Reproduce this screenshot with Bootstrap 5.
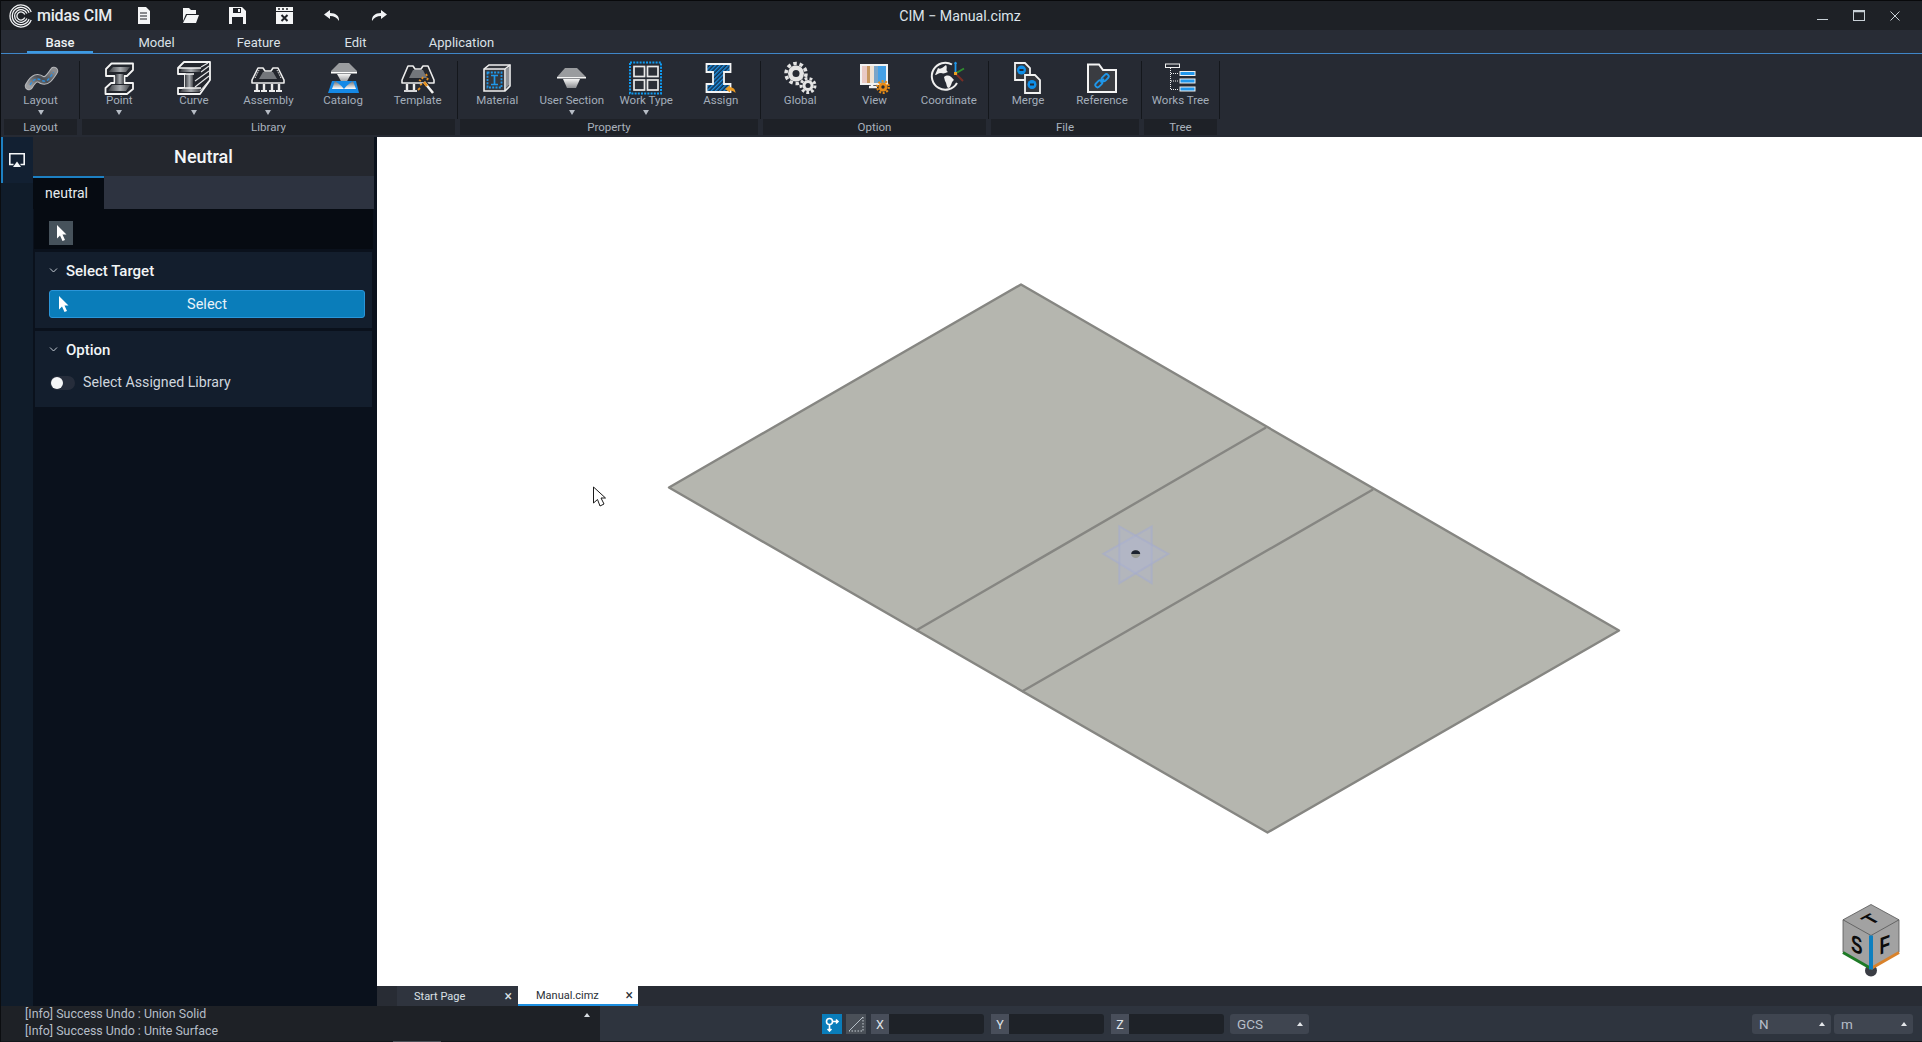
<!DOCTYPE html>
<html lang="en">
<head>
<meta charset="utf-8">
<title>CIM - Manual.cimz</title>
<link href="https://cdn.jsdelivr.net/npm/bootstrap@5.3.0/dist/css/bootstrap.min.css" rel="stylesheet">
<style>
html,body{height:100%;}
body{width:1922px;height:1042px;overflow:hidden;background:#14171c;font-family:Roboto,"Liberation Sans",sans-serif;color:#d8dee6;border-left:1px solid #0b0d10;}
.defs-holder{width:0;height:0;display:block;}
.title-bar{height:30px;flex:none;background:#1e2126;border-top:1px solid #08090b;padding-left:8px;color:#dfe5ea;}
.brand-name{font-size:16px;font-weight:500;letter-spacing:-.2px;margin-left:4px;color:#e8ecef;width:86px;white-space:nowrap;}
.qa-slot{width:47px;display:flex;justify-content:center;}
.qa-first{margin-left:-3px;}
.doc-title{font-size:14.2px;color:#dde4ea;width:200px;text-align:center;margin-left:458px;margin-top:3px;}
.win-ctrls{margin-left:auto;padding-right:22px;gap:25px;}
.tab-row{height:24px;flex:none;background:#282c35;border-bottom:1px solid #3f86c8;padding-left:26px;}
.tab-item{font-size:13px;color:#dbe1e7;text-align:center;height:23px;line-height:25px;border-bottom:2px solid transparent;}
.tab-item.is-on{border-bottom-color:#3d9be3;color:#eef2f5;font-weight:500;width:66px;}
.ribbon{height:83px;flex:none;background:#262a33;padding-left:3px;}
.rb-group{display:flex;flex-direction:column;}
.rb-items{height:65px;display:flex;}
.rb-item{flex:1 1 0;min-width:0;display:flex;flex-direction:column;align-items:center;padding-top:6px;}
.rb-item svg{display:block;overflow:visible;margin-bottom:-1px;}
.rb-text{font-size:11.5px;line-height:14px;color:#a3adba;white-space:nowrap;}
.rb-caret{width:0;height:0;border-left:3.5px solid transparent;border-right:3.5px solid transparent;border-top:5px solid #b6bcc5;margin-top:3px;}
.rb-label{height:16px;line-height:17px;font-size:11.5px;text-align:center;background:#1e2127;color:#a9b1bc;}
.rb-sep{width:1px;margin:7px 2px 18px;background:#14171c;}
.main-area{min-height:0;}
.rail{width:32px;flex:none;background:#101c2a;}
.rail-on{height:46px;border-left:2px solid #1d80c3;padding:10px 0 0 6px;background:#122032;}
.side-panel{width:344px;flex:none;background:#0a111c;padding-right:3px;}
.panel-head{height:39px;background:#24272e;color:#f4f6f8;font-size:18px;font-weight:500;line-height:39px;text-align:center;}
.panel-tabs{height:33px;background:#2d3340;}
.panel-tab{width:71px;background:#060b12;border-top:2px solid #1d80c3;font-size:14px;line-height:31px;padding-left:1px;padding-right:5px;text-align:center;color:#e6ebef;height:33px;}
.panel-tools{height:40px;background:#060b12;padding:12px 0 0 15px;margin:0 1px;}
.tool-btn{width:24px;height:24px;background:#46525b;display:flex;align-items:center;justify-content:center;}
.prop-sec{background:#131e2d;margin:3px 2px 0;height:76px;padding:0 7px 0 14px;}
.sec-head{height:38px;font-size:15px;font-weight:500;color:#f2f5f7;}
.chev{width:16px;margin-right:1px;}
.sel-btn{height:28px;width:316px;--bs-btn-border-radius:3px;background:#0a7dba;border:1px solid #2a95d8;color:#e9f2f8;font-size:14.5px;padding:1px 0 0;position:relative;line-height:26px;}
.sel-btn:hover{background:#0a7dba;border-color:#2a95d8;color:#e9f2f8;}
.sel-ptr{position:absolute;left:8px;top:5px;}
.switch-track{width:25px;height:14px;border-radius:7px;background:#262d3b;display:flex;align-items:center;padding-left:1px;}
.switch-knob{width:12px;height:12px;border-radius:50%;background:#f6f7f8;}
.switch-text{font-size:14.2px;color:#cfd6de;margin-left:8px;}
.opt-row{padding-left:1px;height:28px;}
.work-col{min-width:0;}
.canvas-box{background:#fff;height:849px;}
.canvas-box svg{display:block;}
.doc-tabs{height:20px;flex:none;background:#282c34;padding-left:20px;font-size:11px;line-height:22px;}
.doc-tab{width:121px;background:#2f343e;color:#dbe1e7;padding-left:17px;display:flex;justify-content:space-between;padding-right:6px;}
.doc-x{font-size:14px;line-height:20px;}
.doc-tab.is-on{background:#fff;color:#2b2f36;border-bottom:2px solid #1d8fe0;line-height:20px;width:120px;padding-left:18px;padding-right:5px;}
.doc-tab.is-on .doc-x{line-height:18px;}
.status-bar{height:36px;flex:none;background:#2e343e;border-bottom:1px solid #14171c;}
.log-box{width:599px;height:35px;background:#1e2126;position:relative;padding:0 0 0 24px;font-size:12.4px;line-height:16.500px;color:#b6bec8;}
.log-arrow{position:absolute;left:583px;top:7px;width:0;height:0;border-left:3px solid transparent;border-right:3px solid transparent;border-bottom:4px solid #d8dde2;}
.log-tick{position:absolute;left:392px;bottom:-1px;width:48px;height:1px;background:#4c5058;}
.st-controls{padding-left:222px;width:1322px;height:35px;}
.st-ico{width:20px;height:20px;display:flex;align-items:center;justify-content:center;}
.st-ico.on{background:#0a7dba;margin-right:4px;}
.st-ico.off{background:#4a5058;margin-right:5px;}
.st-field{width:113px;height:20px;background:#1e2228;border-radius:0 3px 3px 0;margin-right:7px;display:flex;}
.st-key{width:18px;background:#484e5a;color:#dfe3e8;font-size:12.5px;line-height:21px;text-align:center;}
.st-sel{height:20px;background:#3f4550;border-radius:3px;color:#b7bfc9;font-size:13.5px;line-height:20px;padding:0 6px 0 7px;display:flex;align-items:center;justify-content:space-between;}
.st-up{width:0;height:0;border-left:3px solid transparent;border-right:3px solid transparent;border-bottom:4px solid #e4e7ea;}
.sel-gcs{width:79px;margin-left:-1px;}
.sel-n{width:79px;margin-left:443px;margin-right:3px;}
.sel-m{width:79px;}
.cube-txt{font-family:"Liberation Sans",sans-serif;font-size:24px;font-weight:700;fill:#0c0c0c;text-anchor:middle;}
</style>
</head>
<body class="d-flex flex-column">
<svg class="defs-holder">
<defs>
<linearGradient id="gSteel" x1="0" x2="1" y1="0" y2="0"><stop offset="0" stop-color="#3a3d42"/><stop offset=".55" stop-color="#a8abaf"/><stop offset="1" stop-color="#47494e"/></linearGradient>
<linearGradient id="gHat" x1="0" x2="0" y1="0" y2="1"><stop offset="0" stop-color="#f5f5f5"/><stop offset="1" stop-color="#8a8c90"/></linearGradient>
<linearGradient id="gBook" x1="0" x2="0" y1="0" y2="1"><stop offset="0" stop-color="#666a70"/><stop offset="1" stop-color="#ffffff"/></linearGradient>
<linearGradient id="gRoad" x1="0" x2="1" y1="1" y2="0"><stop offset="0" stop-color="#9fa1a4"/><stop offset=".5" stop-color="#4a4d53"/><stop offset="1" stop-color="#8b8d91"/></linearGradient>
<pattern id="pHatch" width="3" height="3" patternUnits="userSpaceOnUse" patternTransform="rotate(45)"><rect width="3" height="3" fill="#12314f"/><rect width="1.400" height="3" fill="#1f8fe0"/></pattern>
</defs>
</svg>

<div class="title-bar d-flex align-items-center">
  <svg width="24" height="24" viewBox="0 0 24 24" fill="none" stroke="#f0f2f4" stroke-width="1.300"><path d="M22.200 7.900A11 11 0 1 0 22.200 16.100"/><path d="M20.070 8.740A8.700 8.700 0 1 0 20.070 15.260"/><path d="M17.930 9.600A6.400 6.400 0 1 0 17.930 14.400"/><path d="M15.800 10.460A4.100 4.100 0 1 0 15.800 13.540"/></svg>
  <span class="brand-name">midas CIM</span>
  <span class="qa-slot qa-first"><svg width="14" height="17" viewBox="0 0 14 17"><path d="M1 0H9L13 4V17H1Z" fill="#f4f5f6"/><path d="M3 6H10M3 9H10M3 12H10" stroke="#1e2126" stroke-width="1.200"/></svg></span>
  <span class="qa-slot"><svg width="17" height="17" viewBox="0 0 17 17"><path d="M1 1H7L9 3H14V7H4L1 14Z" fill="#f4f5f6"/><path d="M5 8H17L14 16H1Z" fill="#f4f5f6"/></svg></span>
  <span class="qa-slot"><svg width="17" height="17" viewBox="0 0 17 17"><path d="M0 0H13L17 4V17H0Z" fill="#f4f5f6"/><rect x="4" y="1" width="8" height="5" fill="#1e2126"/><rect x="9" y="2" width="2" height="3" fill="#f4f5f6"/><rect x="3" y="10" width="11" height="7" fill="#1e2126"/></svg></span>
  <span class="qa-slot"><svg width="17" height="17" viewBox="0 0 17 17"><rect width="17" height="17" fill="#f4f5f6"/><path d="M2 2H4M6 2H8M10 2H12" stroke="#1e2126" stroke-width="1.500"/><rect y="4" width="17" height="1" fill="#1e2126"/><path d="M5.500 8L11.500 14M11.500 8L5.500 14" stroke="#1e2126" stroke-width="2"/></svg></span>
  <span class="qa-slot"><svg width="16" height="11" viewBox="0 0 16 11"><path d="M6 0L0 4.500L6 9V6C10 6 13 7.500 15 11C15.500 6 12 3 6 3Z" fill="#f1f3f5"/></svg></span>
  <span class="qa-slot"><svg width="16" height="11" viewBox="0 0 16 11"><path d="M10 0L16 4.500L10 9V6C6 6 3 7.500 1 11C.5 6 4 3 10 3Z" fill="#f1f3f5"/></svg></span>
  <span class="doc-title">CIM − Manual.cimz</span>
  <div class="win-ctrls d-flex align-items-center">
    <svg width="11" height="12" viewBox="0 0 11 12"><path d="M0 9.500H11" stroke="#c8d0d6" stroke-width="1"/></svg>
    <svg width="12" height="11" viewBox="0 0 12 11" fill="none"><rect x=".5" y=".5" width="11" height="10" stroke="#c8d0d6"/><path d="M0 1.500H12" stroke="#c8d0d6" stroke-width="1.500"/></svg>
    <svg width="10" height="10" viewBox="0 0 10 10"><path d="M.5 .5L9.500 9.500M9.500 .5L.5 9.500" stroke="#c8d0d6" stroke-width="1"/></svg>
  </div>
</div>

<div class="tab-row d-flex">
  <div class="tab-item is-on">Base</div>
  <div class="tab-item" style="width:127px">Model</div>
  <div class="tab-item" style="width:77px">Feature</div>
  <div class="tab-item" style="width:117px">Edit</div>
  <div class="tab-item" style="width:95px">Application</div>
</div>

<div class="ribbon d-flex">
  <div class="rb-group" style="width:73px">
    <div class="rb-items">
      <div class="rb-item"><svg width="36" height="34" viewBox="0 0 36 34"><path d="M6 26C11 17 15 17 19 20C24 22 27 17 31 11" fill="none" stroke="#b8b9bc" stroke-width="8.500" stroke-linecap="round"/><path d="M6 26C11 17 15 17 19 20C24 22 27 17 31 11" fill="none" stroke="url(#gRoad)" stroke-width="6.500" stroke-linecap="round"/><path d="M7 25C11 18 15 18 19 20.500C24 23 27 18 30.500 12" fill="none" stroke="#2a8fe0" stroke-width="1.300" stroke-dasharray="3 2"/></svg><div class="rb-text">Layout</div><div class="rb-caret"></div></div>
    </div>
    <div class="rb-label">Layout</div>
  </div>
  <div class="rb-sep"></div>
  <div class="rb-group" style="width:373px">
    <div class="rb-items">
      <div class="rb-item"><svg width="36" height="34" viewBox="0 0 36 34"><path d="M5 9L10.500 3.500H32V10L26 16H23.500V23H32V29L26 34H4.500V28L10 23H13.500V16H5Z" fill="#23262d" stroke="#f4f4f4" stroke-width="1.800" stroke-linejoin="round"/><path d="M7.500 12L12 7H29L25 12Z" fill="url(#gSteel)"/><rect x="14.500" y="14" width="8" height="10" fill="url(#gSteel)"/><path d="M7 31L11 25H29L25 31Z" fill="url(#gSteel)"/></svg><div class="rb-text">Point</div><div class="rb-caret"></div></div>
      <div class="rb-item"><svg width="36" height="34" viewBox="0 0 36 34"><path d="M2 8L8 2H34V20L24 34H2V28H9V14H2Z" fill="#23262d" stroke="#f4f4f4" stroke-width="1.800" stroke-linejoin="round"/><path d="M9 14H17V28H9Z" fill="url(#gSteel)"/><path d="M4 12H24V8H6ZM4 32H24V28H7Z" fill="url(#gSteel)"/><path d="M25 7L32 3M25 12L33 6M19 21L33 11M19 27L33 16M24 31L33 21" stroke="#e5e6e8" stroke-width="1.100"/><path d="M2 14H18M2 8H25M2 28H25" stroke="#f4f4f4" stroke-width="1.500"/></svg><div class="rb-text">Curve</div><div class="rb-caret"></div></div>
      <div class="rb-item"><svg width="36" height="34" viewBox="0 0 36 34"><path d="M2 20L8 8H13L15 11H21L23 8H28L34 20V23H2Z" fill="#23262d" stroke="#ececec" stroke-width="1.600" stroke-linejoin="round"/><path d="M9 19L13 12H23L27 19Z" fill="#73767b"/><path d="M7 24V30M14 24V30M22 24V30M29 24V30" stroke="#ececec" stroke-width="2.400"/><path d="M4 31H10M11 31H17M19 31H25M26 31H32" stroke="#ececec" stroke-width="1.800"/><path d="M5 18L9 10M31 18L27 10" stroke="#ececec" stroke-width="1" stroke-dasharray="1.500 1"/></svg><div class="rb-text">Assembly</div><div class="rb-caret"></div></div>
      <div class="rb-item"><svg width="36" height="34" viewBox="0 0 36 34"><path d="M14 3H24L32 11V13H6V11Z" fill="#9a9c9f"/><rect x="6" y="12" width="26" height="1.500" fill="#fff"/><path d="M12 14H26L21 23H17Z" fill="url(#gHat)"/><path d="M7 21H31L34 33H3Z" fill="#1589e6"/><path d="M10 21C14 24 16 25 19 29C22 25 24 24 28 21L31 29H7Z" fill="url(#gBook)"/></svg><div class="rb-text">Catalog</div></div>
      <div class="rb-item"><svg width="36" height="34" viewBox="0 0 36 34"><path d="M2 20L8 6H13L15 9H21L23 6H28L34 20V23H2Z" fill="#23262d" stroke="#ececec" stroke-width="1.600" stroke-linejoin="round"/><path d="M9 18L13 10H23L27 18Z" fill="#73767b"/><path d="M7 24V30M14 24V30" stroke="#ececec" stroke-width="2.400"/><path d="M4 31H17" stroke="#ececec" stroke-width="1.800"/><path d="M24 22L33 33" stroke="#23262d" stroke-width="5"/><path d="M24 22L33 33" stroke="#f2f2f2" stroke-width="2.600"/><path d="M24 22L27 26" stroke="#e6901f" stroke-width="2.600"/><path d="M20 25L22 24M22 19L23 17M28 18L27 20M19 20L21 21M26 14L27 16M18 30L20 28" stroke="#e6901f" stroke-width="1.800"/></svg><div class="rb-text">Template</div></div>
    </div>
    <div class="rb-label">Library</div>
  </div>
  <div class="rb-sep"></div>
  <div class="rb-group" style="width:298px">
    <div class="rb-items">
      <div class="rb-item"><svg width="36" height="34" viewBox="0 0 36 34"><path d="M5 9L10 5H31V26L26 31H5Z" fill="#34373d" stroke="#efefef" stroke-width="1.600"/><path d="M5 9H26V31M26 9L31 5" fill="none" stroke="#efefef" stroke-width="1.600"/><path d="M27 9L30 7V25L27 28Z" fill="#8e9196"/><rect x="8.500" y="12.500" width="14" height="15" fill="none" stroke="#1f97ea" stroke-width="1.800" stroke-dasharray="2 1.300"/><path d="M12 15.500H19M12 24.500H19M15.500 15.500V24.500" stroke="#1f97ea" stroke-width="1.700"/></svg><div class="rb-text">Material</div></div>
      <div class="rb-item"><svg width="36" height="34" viewBox="0 0 36 34"><path d="M11 8H23L32 17V18H3V17Z" fill="#9a9c9f"/><rect x="3" y="17" width="29" height="1.500" fill="#f4f4f4"/><path d="M9 19H26L22 28H13Z" fill="url(#gHat)"/></svg><div class="rb-text">User Section</div><div class="rb-caret"></div></div>
      <div class="rb-item"><svg width="36" height="34" viewBox="0 0 36 34"><rect x="2" y="2.500" width="31" height="31" fill="none" stroke="#0f9bf2" stroke-width="2" stroke-dasharray="2 1.200"/><g fill="#2b2f37" stroke="#e9e9e9" stroke-width="1.700"><rect x="6" y="6.500" width="10.500" height="10"/><rect x="19.500" y="6.500" width="10.500" height="10"/><rect x="6" y="20" width="10.500" height="10"/><rect x="19.500" y="20" width="10.500" height="10"/></g></svg><div class="rb-text">Work Type</div><div class="rb-caret"></div></div>
      <div class="rb-item"><svg width="36" height="34" viewBox="0 0 36 34"><path d="M3.500 4H27.500V12H21V24H27.500V32H3.500V24H10V12H3.500Z" fill="url(#pHatch)" stroke="#f4f4f4" stroke-width="1.800"/><path d="M27 25L22 29L27 32.500V30.500C29.500 30.500 31 31.500 32.500 33C32.500 29.500 30.500 27.200 27 27.200Z" fill="#eb9a21"/></svg><div class="rb-text">Assign</div></div>
    </div>
    <div class="rb-label">Property</div>
  </div>
  <div class="rb-sep"></div>
  <div class="rb-group" style="width:223px">
    <div class="rb-items">
      <div class="rb-item"><svg width="36" height="34" viewBox="0 0 36 34"><circle cx="14" cy="13.500" r="8" fill="#e4e4e4"/><circle cx="14" cy="13.500" r="10" fill="none" stroke="#e4e4e4" stroke-width="3.500" stroke-dasharray="3.500 2.800"/><circle cx="14" cy="13.500" r="3.500" fill="#262a33"/><circle cx="26" cy="25.500" r="8.500" fill="#262a33"/><circle cx="26" cy="25.500" r="5.500" fill="#e4e4e4"/><circle cx="26" cy="25.500" r="7" fill="none" stroke="#e4e4e4" stroke-width="3" stroke-dasharray="2.800 2.100"/><circle cx="26" cy="25.500" r="2.500" fill="#262a33"/></svg><div class="rb-text">Global</div></div>
      <div class="rb-item"><svg width="36" height="34" viewBox="0 0 36 34"><rect x="5" y="5" width="26" height="19" fill="#262a33" stroke="#f2f2f2" stroke-width="2"/><rect x="6" y="6" width="5" height="17" fill="#e9c9c4"/><rect x="11" y="6" width="3" height="17" fill="#c7975f"/><rect x="14" y="6" width="4" height="17" fill="#efe2d3"/><rect x="18" y="6" width="4" height="17" fill="#7aa5c9"/><rect x="22" y="6" width="8" height="17" fill="#44a0e6"/><path d="M13 27H21" stroke="#f2f2f2" stroke-width="2.500"/><path d="M16 24V27" stroke="#f2f2f2" stroke-width="2.500"/><circle cx="27" cy="27" r="4.500" fill="#e78b17"/><circle cx="27" cy="27" r="5.800" fill="none" stroke="#e78b17" stroke-width="2.200" stroke-dasharray="2 1.600"/><circle cx="27" cy="27" r="1.700" fill="#262a33"/></svg><div class="rb-text">View</div></div>
      <div class="rb-item"><svg width="36" height="34" viewBox="0 0 36 34"><path d="M21 4.500A13.500 13.500 0 1 0 26 23" fill="none" stroke="#efefef" stroke-width="2"/><path d="M7 8C10 10 12 7 15 5C17 8 14 10 17 12C14 13 13 14 10 13C7 13 6 15 4 15ZM13 17C17 14 20 16 23 20C20 22 21 25 18 28C15 28 16 23 14 21Z" fill="#efefef"/><path d="M24.500 13.500V2" stroke="#1f97ea" stroke-width="1.800"/><path d="M23 4L24.500 1.500L26 4Z" fill="#1f97ea"/><path d="M24.500 13.500L33 8.500" stroke="#2f8d2f" stroke-width="2"/><path d="M24.500 13.500L32 21" stroke="#7b2d24" stroke-width="2"/><rect x="23" y="12" width="3" height="3" fill="#eba021"/></svg><div class="rb-text">Coordinate</div></div>
    </div>
    <div class="rb-label">Option</div>
  </div>
  <div class="rb-sep"></div>
  <div class="rb-group" style="width:148px">
    <div class="rb-items">
      <div class="rb-item"><svg width="36" height="34" viewBox="0 0 36 34"><path d="M5 3H15L20 8V20H5Z" fill="#34373d" stroke="#f2f2f2" stroke-width="1.800"/><circle cx="11.500" cy="10" r="4.500" fill="#0f8fe8"/><rect x="9.500" y="9" width="4" height="2" fill="#202a36"/><path d="M15 15H25L30 20V33H15Z" fill="#34373d" stroke="#f2f2f2" stroke-width="1.800"/><circle cx="22" cy="24.500" r="4.500" fill="#0f8fe8"/><rect x="20" y="23.500" width="4" height="2" fill="#202a36"/></svg><div class="rb-text">Merge</div></div>
      <div class="rb-item"><svg width="36" height="34" viewBox="0 0 36 34"><path d="M4 4.500H15L19 10H32V32H4Z" fill="#3a3c41" stroke="#f4f4f4" stroke-width="2"/><path d="M16.500 22.500L20 19" stroke="#1f97ea" stroke-width="1.800"/><rect x="19" y="13.500" width="4.500" height="8" rx="2.200" transform="rotate(45 21 17.500)" fill="none" stroke="#1f97ea" stroke-width="1.800"/><rect x="12.500" y="20" width="4.500" height="8" rx="2.200" transform="rotate(45 15 24)" fill="none" stroke="#1f97ea" stroke-width="1.800"/></svg><div class="rb-text">Reference</div></div>
    </div>
    <div class="rb-label">File</div>
  </div>
  <div class="rb-sep"></div>
  <div class="rb-group" style="width:73px">
    <div class="rb-items">
      <div class="rb-item"><svg width="36" height="34" viewBox="0 0 36 34"><rect x="2.500" y="4" width="14" height="3.500" fill="none" stroke="#f0f0f0" stroke-width="1"/><path d="M7.500 8V30M8 13.500H16M8 21H16M8 29.500H16" stroke="#f0f0f0" stroke-width="1" stroke-dasharray="1 1"/><g fill="#2197ec" stroke="#f0f0f0" stroke-width="1"><rect x="17" y="11.500" width="15" height="4"/><rect x="17" y="19" width="15" height="4"/><rect x="17" y="27" width="15" height="4"/></g></svg><div class="rb-text">Works Tree</div></div>
    </div>
    <div class="rb-label">Tree</div>
  </div>
  <div class="rb-sep"></div>
</div>

<div class="main-area d-flex flex-grow-1">
  <div class="rail">
    <div class="rail-on"><svg width="16" height="14" viewBox="0 0 16 14" fill="none"><path d="M4.500 11.500H.8V.8H15.200V11.500H11.500" stroke="#f4f6f8" stroke-width="1.600"/><path d="M8 8.500L12 14H4Z" fill="#f4f6f8"/></svg></div>
  </div>
  <div class="side-panel">
    <div class="panel-head">Neutral</div>
    <div class="panel-tabs"><div class="panel-tab">neutral</div></div>
    <div class="panel-tools"><div class="tool-btn"><svg width="11" height="16" viewBox="0 0 11 16"><path d="M1 0L10.500 9.500H6.500L9 15L6.500 16L4 10.500L1 13.500Z" fill="#fff"/></svg></div></div>
    <div class="prop-sec">
      <div class="sec-head d-flex align-items-center"><svg class="chev" width="16" height="8" viewBox="0 0 16 8" fill="none"><path d="M1 1.500L4.500 5L8 1.500" stroke="#c5ccd4" stroke-width="1"/></svg>Select Target</div>
      <button class="btn sel-btn d-block" type="button"><svg class="sel-ptr" width="11" height="16" viewBox="0 0 11 16"><path d="M1 0L10.500 9.500H6.500L9 15L6.500 16L4 10.500L1 13.500Z" fill="#fff"/></svg>Select</button>
    </div>
    <div class="prop-sec">
      <div class="sec-head d-flex align-items-center"><svg class="chev" width="16" height="8" viewBox="0 0 16 8" fill="none"><path d="M1 1.500L4.500 5L8 1.500" stroke="#c5ccd4" stroke-width="1"/></svg>Option</div>
      <div class="opt-row d-flex align-items-center"><div class="switch-track"><div class="switch-knob"></div></div><span class="switch-text">Select Assigned Library</span></div>
    </div>
  </div>
  <div class="work-col flex-grow-1 d-flex flex-column">
    <div class="canvas-box">
      <svg width="1544" height="849" viewBox="377 136.500 1544 849">
        <polygon points="1021,284 1619,630 1267.500,832 669,487" fill="#b5b6af" stroke="#868682" stroke-width="2.400" stroke-linejoin="round"/>
        <path d="M1266 427L916 630M1373 489L1022 691" stroke="#868682" stroke-width="2.400"/>
        <g fill="#b1b5d6" fill-opacity=".34" stroke="#a6adcb" stroke-width="2" stroke-opacity=".62">
          <polygon points="1103.300,553.300 1151.700,526 1151.700,582.700"/>
          <polygon points="1168.300,553.300 1119.300,526 1119.300,582.700"/>
        </g>
        <ellipse cx="1135.700" cy="553.500" rx="4.500" ry="4" fill="#9a9c94"/>
        <path d="M1131.200 553.500A4.500 3.800 0 0 1 1140.200 553.500Z" fill="#1c2330"/>
        <path d="M593.500 486.500V502.500L597.500 499L600 505.500L604 503.500L601 497.500H605.500Z" fill="#fff" stroke="#1a1a1a" stroke-width="1"/>
        <g transform="translate(1740 890)">
          <circle cx="131" cy="80" r="6" fill="#3a3d44"/>
          <polygon points="131,14 159,29.300 159,61.700 131,78 103,61.700 103,29.300" fill="#a2a2a2" stroke="#555" stroke-width=".8"/>
          <path d="M103 29.300L131 45L159 29.300" fill="none" stroke="#555" stroke-width=".8"/>
          <path d="M103 62L131 78" stroke="#1e7a26" stroke-width="3"/>
          <path d="M131 78L159 62" stroke="#d9822b" stroke-width="3"/>
          <path d="M131 45V79" stroke="#0d7fbf" stroke-width="4"/>
          <text class="cube-txt" transform="matrix(.7 -.38 .7 .38 130.500 28.500) translate(0 8.500)">T</text>
          <text class="cube-txt" transform="matrix(.72 .28 0 1 116.700 54) translate(0 8.500)">S</text>
          <text class="cube-txt" transform="matrix(.72 -.28 0 1 144.700 54) translate(0 8.500)">F</text>
        </g>
      </svg>
    </div>
    <div class="doc-tabs d-flex">
      <div class="doc-tab"><span>Start Page</span><span class="doc-x">×</span></div>
      <div class="doc-tab is-on"><span>Manual.cimz</span><span class="doc-x">×</span></div>
    </div>
  </div>
</div>

<div class="status-bar d-flex">
  <div class="log-box">[Info] Success Undo : Union Solid<br>[Info] Success Undo : Unite Surface<span class="log-arrow"></span><span class="log-tick"></span></div>
  <div class="st-controls d-flex align-items-center">
    <div class="st-ico on"><svg width="16" height="16" viewBox="0 0 16 16" fill="none" stroke="#fff" stroke-width="1.600"><circle cx="5.500" cy="5.500" r="3"/><path d="M8.500 5.500H14M12 3.500L14 5.500L12 7.500M5.500 8.500V15M3.500 13L5.500 15L7.500 13"/></svg></div>
    <div class="st-ico off"><svg width="16" height="16" viewBox="0 0 16 16" fill="none"><path d="M1 15L15 1" stroke="#b6c0c8" stroke-width="1"/><path d="M15 1V15H1" stroke="#c5ccd2" stroke-width="1" stroke-dasharray="1.500 1.500"/></svg></div>
    <div class="st-field"><div class="st-key">X</div></div>
    <div class="st-field"><div class="st-key">Y</div></div>
    <div class="st-field"><div class="st-key">Z</div></div>
    <div class="st-sel sel-gcs"><span>GCS</span><span class="st-up"></span></div>
    <div class="st-sel sel-n"><span>N</span><span class="st-up"></span></div>
    <div class="st-sel sel-m"><span>m</span><span class="st-up"></span></div>
  </div>
</div>

<script src="https://cdn.jsdelivr.net/npm/bootstrap@5.3.0/dist/js/bootstrap.bundle.min.js"></script>
</body>
</html>
